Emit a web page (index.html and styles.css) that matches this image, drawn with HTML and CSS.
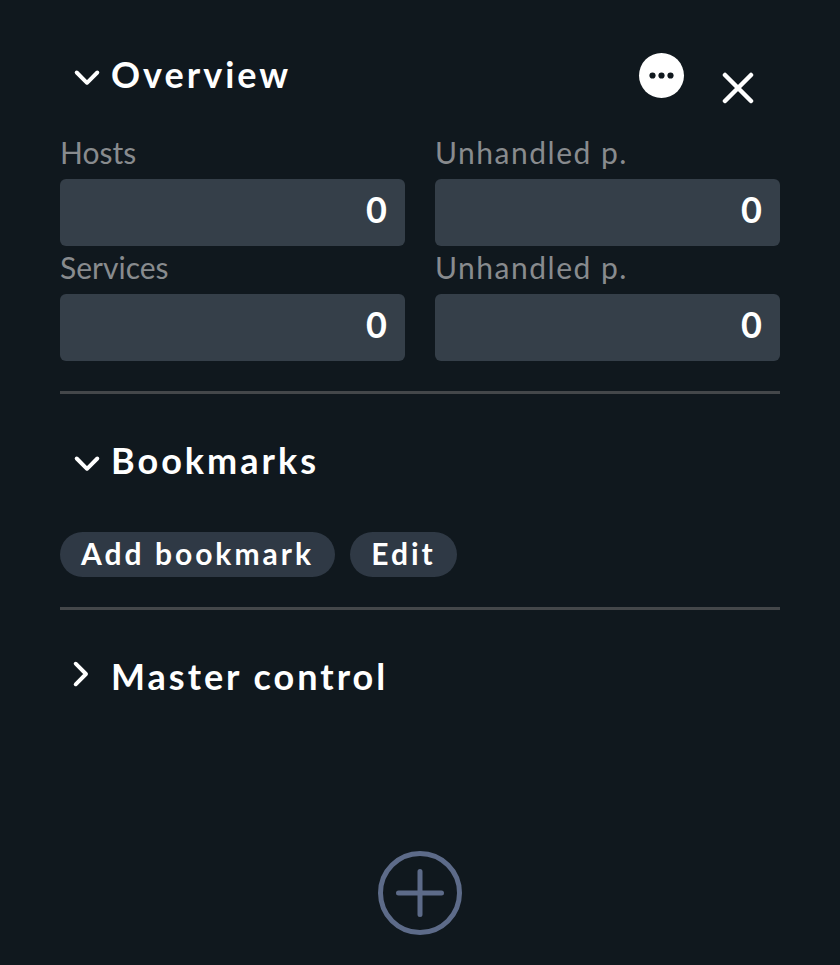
FILE: index.html
```
<!DOCTYPE html>
<html lang="en">
<head>
<meta charset="utf-8">
<title>Sidebar</title>
<link rel="stylesheet" href="styles.css">
</head>
<body>
<main class="sidebar">
  <section class="snapin overview">
    <header class="head">
      <svg class="chevron" viewBox="0 0 30 30"><path d="M4.700 10.500L15 20.800L25.300 10.500"/></svg>
      <h2 class="title">Overview</h2>
      <button class="more" aria-label="More"><svg viewBox="0 0 45 45"><circle cx="13.500" cy="22.500" r="3.100"/><circle cx="22.500" cy="22.500" r="3.100"/><circle cx="31.500" cy="22.500" r="3.100"/></svg></button>
      <button class="close" aria-label="Close"><svg viewBox="0 0 32 32"><path d="M3 3L29 29M29 3L3 29"/></svg></button>
    </header>
    <div class="stats">
      <div class="stat"><span class="label tight">Hosts</span><div class="value">0</div></div>
      <div class="stat"><span class="label">Unhandled p.</span><div class="value">0</div></div>
      <div class="stat"><span class="label tight">Services</span><div class="value">0</div></div>
      <div class="stat"><span class="label">Unhandled p.</span><div class="value">0</div></div>
    </div>
  </section>
  <section class="snapin bookmarks">
    <header class="head">
      <svg class="chevron" viewBox="0 0 30 30"><path d="M4.700 10.500L15 20.800L25.300 10.500"/></svg>
      <h2 class="title">Bookmarks</h2>
    </header>
    <div class="actions"><button class="pill add">Add bookmark</button><button class="pill edit">Edit</button></div>
  </section>
  <section class="snapin master">
    <header class="head">
      <svg class="chevron" viewBox="0 0 30 30"><path d="M3.700 -0.300L14 10L3.700 20.300"/></svg>
      <h2 class="title">Master control</h2>
    </header>
  </section>
  <button class="plus" aria-label="Add element"><svg viewBox="0 0 84 84"><circle cx="42" cy="42" r="39.500"/><path d="M42 20.500V63.500M20.500 42H63.500"/></svg></button>
</main>
</body>
</html>
```
FILE: styles.css
```
* { box-sizing: border-box; }
body { margin: 0; background: #10181e; color: #fff; font-family: Lato, sans-serif; }
button { border: 0; padding: 0; margin: 0; font: inherit; color: inherit; background: none; }
svg { display: block; fill: none; stroke: currentColor; stroke-linecap: round; stroke-linejoin: round; }
.sidebar { width: 840px; height: 965px; padding: 0 60px; display: flex; flex-direction: column; overflow: hidden; }
.snapin { border-bottom: 3px solid #44474a; flex: none; }
.overview { height: 394px; padding-top: 45px; }
.bookmarks { height: 216px; padding-top: 37px; }
.master { padding-top: 37px; height: 241px; border: 0; }
.head { display: flex; align-items: center; height: 60px; padding-left: 12px; }
.chevron { width: 30px; height: 30px; stroke-width: 3.900; margin-top: 4px; overflow: visible; }
.title { margin: 0 0 0 9px; font-size: 36px; line-height: 58px; height: 60px; font-weight: 700; letter-spacing: 3px; white-space: nowrap; }
.more { width: 45px; height: 45px; margin-left: auto; border-radius: 50%; background: #fff; }
.more svg { fill: #10181e; stroke: none; }
.close { width: 32px; height: 32px; margin: 26px 26px 0 38px; }
.close svg { stroke-width: 4.500; }
.stats { display: grid; grid-template-columns: 345px 345px; column-gap: 30px; margin-top: 26px; }
.stat { height: 115px; }
.label { display: block; height: 48px; line-height: 42px; font-size: 30px; letter-spacing: 1.500px; color: #888b8e; }
.tight { letter-spacing: 0; }
.value { height: 67px; border-radius: 6px; background: #353f49; padding-right: 18px; text-align: right; font-size: 36px; line-height: 61px; font-weight: 700; }
.actions { display: flex; gap: 15px; margin-top: 41px; }
.pill { display: flex; justify-content: center; height: 45px; border-radius: 23px; background: #2f3945; font-size: 30px; line-height: 43px; font-weight: 700; letter-spacing: 3px; white-space: nowrap; }
.add { width: 275px; }
.edit { width: 107px; }
.plus { width: 84px; height: 84px; align-self: center; color: #5d6b89; }
.plus svg { stroke-width: 5; }
```
